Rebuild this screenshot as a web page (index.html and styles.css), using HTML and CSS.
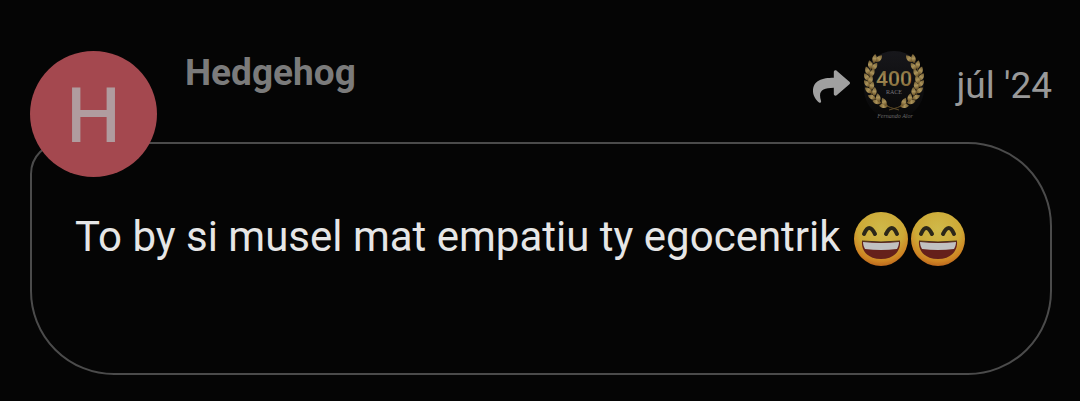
FILE: index.html
```html
<!DOCTYPE html>
<html lang="sk">

<head>
    <meta charset="UTF-8">
    <meta name="viewport" content="width=device-width, initial-scale=1.0">
    <title>Hedgehog</title>
    <link rel="stylesheet" href="styles.css">
</head>

<body>
    <!-- shapes used more than once -->
    <svg class="defs" aria-hidden="true">
        <defs>
            <radialGradient id="face" cx="50%" cy="32%" r="70%">
                <stop offset="0" stop-color="#cfb94a" />
                <stop offset="0.6" stop-color="#cda936" />
                <stop offset="0.85" stop-color="#cf8423" />
                <stop offset="1" stop-color="#b8621d" />
            </radialGradient>
            <linearGradient id="gold" x1="0" y1="0" x2="0" y2="1">
                <stop offset="0" stop-color="#6f5a30" />
                <stop offset="0.5" stop-color="#ab935a" />
                <stop offset="1" stop-color="#5f471f" />
            </linearGradient>
            <linearGradient id="disc" x1="0" y1="0" x2="0" y2="1">
                <stop offset="0" stop-color="#17171b" />
                <stop offset="1" stop-color="#070707" />
            </linearGradient>
            <symbol id="grin" viewBox="0 0 54 54">
                <circle cx="27" cy="27" r="27" fill="url(#face)" />
                <path d="M10 22Q15 10 21 22M32 22Q38 10 43 22" fill="none" stroke="#2b2719" stroke-width="4" stroke-linecap="round" />
                <path d="M8 29q19 2 38 0c1 10-6 18-19 18S7 39 8 29z" fill="#65201b" />
                <path d="M9 30q18 2 36 0c0 3-1 5-2 7q-16 2-32 0c-1-2-2-4-2-7z" fill="#c1c1c1" />
                <path d="M8 29q19 2 38 0" fill="none" stroke="#47331c" stroke-width="1" />
            </symbol>
            <path id="leaf" d="M0 0C-3-2-3-6 0-9C3-6 3-2 0 0z" />
            <g id="branch">
                <path d="M36 60Q18 56 9 45Q3 32 8 17Q11 9 17 6" fill="none" stroke="#5f4b26" stroke-width="1" />
                <use href="#leaf" transform="translate(25 56) rotate(-88)" />
                <use href="#leaf" transform="translate(18 53) rotate(-75)" />
                <use href="#leaf" transform="translate(13 49) rotate(-65)" />
                <use href="#leaf" transform="translate(9 43) rotate(-52)" />
                <use href="#leaf" transform="translate(7 37) rotate(-42)" />
                <use href="#leaf" transform="translate(6 31) rotate(-32)" />
                <use href="#leaf" transform="translate(6 25) rotate(-20)" />
                <use href="#leaf" transform="translate(8 19) rotate(-10)" />
                <use href="#leaf" transform="translate(11 13) rotate(8)" />
                <use href="#leaf" transform="translate(13 12) rotate(42)" />
                <use href="#leaf" transform="translate(9 20) rotate(35)" />
                <use href="#leaf" transform="translate(7 27) rotate(28)" />
                <use href="#leaf" transform="translate(6 34) rotate(20)" />
                <use href="#leaf" transform="translate(8 40) rotate(12)" />
                <use href="#leaf" transform="translate(11 46) rotate(5)" />
                <use href="#leaf" transform="translate(16 52) rotate(-10)" />
                <use href="#leaf" transform="translate(23 56) rotate(-25)" />
            </g>
        </defs>
    </svg>

    <article class="post">
        <a class="avatar" href="#" aria-label="Profil Hedgehog">H</a>

        <header class="post-header">
            <a class="name" href="#">Hedgehog</a>
            <div class="meta">
                <a class="reply-to" href="#" aria-label="Odpoveď na">
                    <svg class="share" viewBox="0 0 512 512">
                        <path d="M503.691 189.836L327.687 37.851C312.281 24.546 288 35.347 288 56.015v80.053C127.371 137.907 0 170.1 0 322.326c0 61.441 39.581 122.309 83.333 154.132 13.653 9.931 33.111-2.533 28.077-18.631C66.066 312.814 132.917 274.316 288 272.085V360c0 20.7 24.3 31.453 39.687 18.164l176.004-152c11.071-9.562 11.086-26.753 0-36.328z" />
                    </svg>
                    <svg class="badge" viewBox="0 0 62 70">
                        <rect x="1" y="1" width="60" height="68" rx="30" fill="url(#disc)" />
                        <g fill="url(#gold)">
                            <use href="#branch" />
                            <use href="#branch" transform="translate(62 0) scale(-1 1)" />
                        </g>
                        <text class="badge-number" x="31" y="36">400</text>
                        <text class="badge-race" x="31" y="44">RACE</text>
                        <text class="badge-sign" x="32" y="68">Fernando Alor</text>
                    </svg>
                </a>
                <a class="date" href="#">júl '24</a>
            </div>
        </header>

        <div class="bubble">
            <p>To by si musel mat empatiu ty egocentrik <svg class="emoji" role="img" aria-label="😄"><use href="#grin" /></svg><svg class="emoji" role="img" aria-label="😄"><use href="#grin" /></svg></p>
        </div>
    </article>
</body>

</html>
```

FILE: styles.css
```css
body {
    font-family: Roboto, sans-serif;
    background-color: #050505;
    color: #e6e6e6;
    margin: 0;
}

a {
    color: inherit;
    text-decoration: none;
}

.defs {
    position: absolute;
    width: 0;
    height: 0;
}

.post {
    position: relative;
    padding: 50px 28px 26px 30px;
}

/* sits over the corner of the bubble */
.avatar {
    position: absolute;
    top: 51px;
    left: 30px;
    width: 127px;
    height: 126px;
    border-radius: 50%;
    background-color: #a4484f;
    color: #b09c9f;
    font-family: "Noto Sans", sans-serif;
    font-size: 77px;
    font-weight: 500;
    line-height: 124px;
    text-align: center;
}

.post-header {
    display: flex;
    justify-content: space-between;
    align-items: flex-start;
    height: 92px;
    padding-left: 155px;
}

.name {
    color: #7b7b7b;
    font-size: 37px;
    font-weight: 700;
    line-height: 46px;
}

.meta,
.reply-to {
    display: flex;
    align-items: center;
}

.meta {
    gap: 32px;
}

.reply-to {
    gap: 13px;
}

.share {
    width: 37px;
    height: 37px;
    padding-top: 2px;
    fill: #a0a0a0;
}

.badge {
    width: 62px;
    height: 70px;
}

.badge text {
    text-anchor: middle;
}

.badge-number {
    font-family: Roboto, sans-serif;
    font-size: 21px;
    font-weight: 500;
    fill: url(#gold);
}

.badge-race {
    font-family: "Liberation Serif", serif;
    font-size: 6px;
    fill: #77777a;
}

.badge-sign {
    font-family: "Liberation Serif", serif;
    font-size: 6px;
    font-style: italic;
    fill: #6a6a6a;
}

.date {
    padding-top: 2px;
    color: #999;
    font-size: 37px;
    line-height: 44px;
}

.bubble {
    box-sizing: border-box;
    min-height: 233px;
    padding: 63px 43px;
    border: 2px solid #4b4b4b;
    border-radius: 32px 84px 84px 84px;
}

.bubble p {
    margin: 0;
    font-size: 42px;
    line-height: 60px;
}

.emoji {
    width: 54px;
    height: 54px;
    margin-left: 3px;
    vertical-align: -15px;
}
```
